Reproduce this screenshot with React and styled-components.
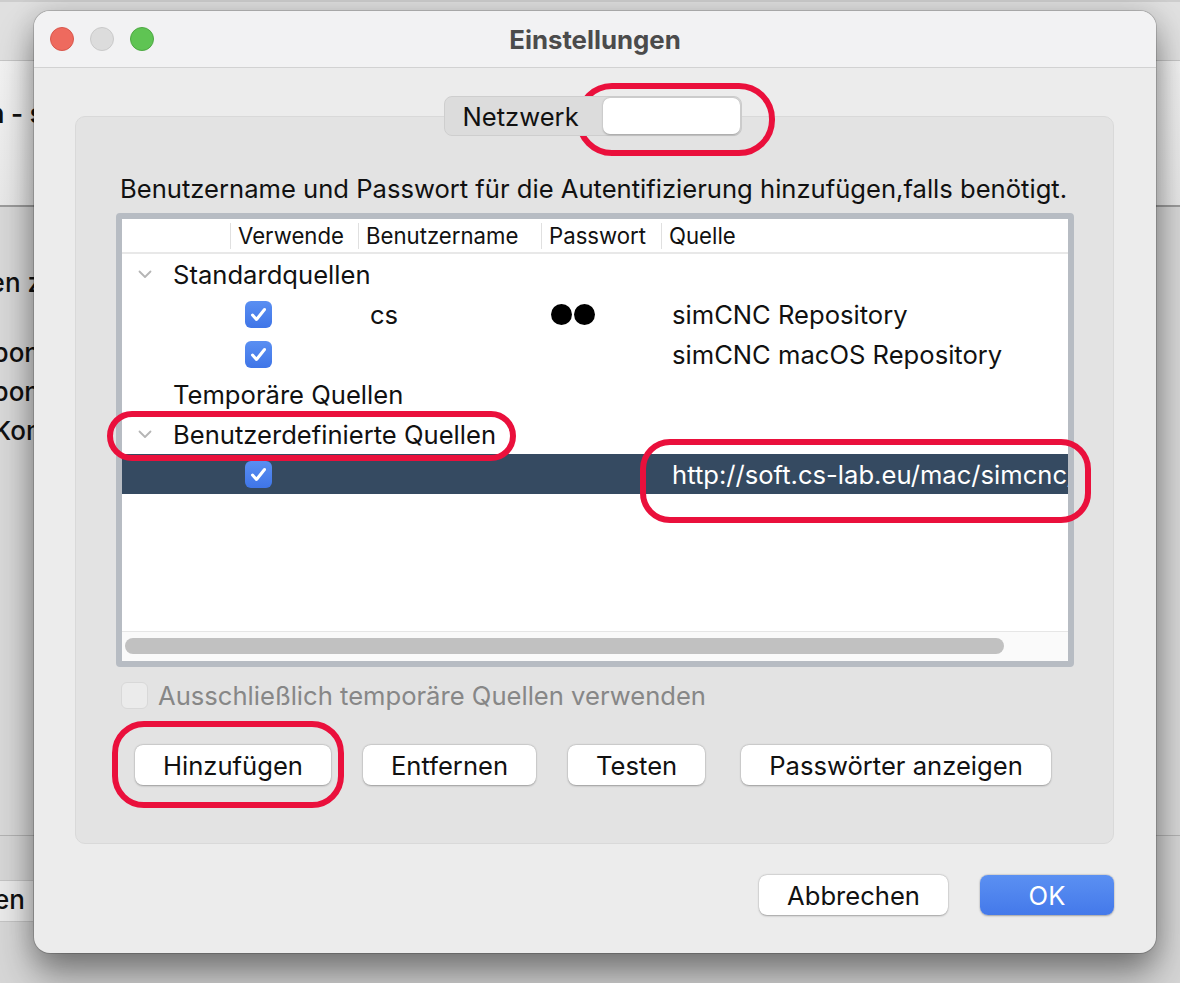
import React from "react";
import styled, { createGlobalStyle } from "styled-components";

const GlobalStyle = createGlobalStyle`
  html, body {
    margin: 0;
    padding: 0;
  }
  body {
    width: 1180px;
    height: 983px;
    overflow: hidden;
    font-family: Inter, "Liberation Sans", Arial, sans-serif;
    color: #111;
  }
`;

const COLS = "108px 128px 183px 120px 1fr";
const TEXT = "25.6px";

const Desktop = styled.div`
  position: relative;
  width: 1180px;
  height: 983px;
  overflow: hidden;
  background: #d2d2d2;
`;

/* the app window behind the dialog */
const BackWindow = styled.div`
  display: flex;
  flex-direction: column;
  height: 100%;
`;

const BackToolbar = styled.div`
  height: 58px;
  background: #e0e0e0;
  border-top: 2px solid #cdcdcd;
  border-bottom: 1px solid #c6c6c6;
`;

const BackHeader = styled.div`
  height: 146px;
  padding-top: 33px;
  box-sizing: border-box;
  background: linear-gradient(#f2f2f2, #e8e8e8);
  border-bottom: 2px solid #9c9c9c;
`;

const BackContent = styled.div`
  flex: 1;
  padding-top: 56px;
  background: #d8d8d8;
  border-bottom: 1px solid #b3b3b3;
`;

const BackFooter = styled.div`
  height: 147px;
  display: flex;
  flex-direction: column;
  padding-top: 44px;
  box-sizing: border-box;
  background: #d6d6d6;
`;

const BackButtonRow = styled.div`
  width: 33px;
  height: 40px;
  background: #e9e9e9;
  border-top: 1px solid #c4c4c4;
  border-bottom: 1px solid #c4c4c4;
`;

const BackText = styled.div`
  width: ${(p) => p.$w || 40}px;
  overflow: hidden;
  display: flex;
  justify-content: flex-end;
  box-sizing: border-box;
  padding-right: ${(p) => p.$pr || 0}px;
  white-space: nowrap;
  font-size: 26px;
  line-height: ${(p) => p.$lh || 39}px;
  font-weight: ${(p) => (p.$bold ? 600 : 500)};
  margin-top: ${(p) => p.$mt || 0}px;
  color: #111;
`;

/* dialog */
const Dialog = styled.div`
  position: absolute;
  left: 34px;
  top: 11px;
  width: 1122px;
  height: 942px;
  display: flex;
  flex-direction: column;
  background: #ececec;
  border-radius: 16px;
  box-shadow: 0 0 0 1px rgba(0, 0, 0, 0.16), 0 22px 36px rgba(0, 0, 0, 0.42),
    0 0 26px rgba(0, 0, 0, 0.14);
  overflow: hidden;
`;

const TitleBar = styled.div`
  height: 56px;
  flex-shrink: 0;
  display: grid;
  grid-template-columns: 1fr auto 1fr;
  align-items: center;
  padding: 0 16px;
  background: #f2f2f3;
  border-bottom: 1px solid #d2d2d2;
`;

const Lights = styled.div`
  display: flex;
  gap: 16px;
`;

const Light = styled.span`
  width: 24px;
  height: 24px;
  border-radius: 50%;
  box-sizing: border-box;
  background: ${(p) => p.$bg};
  border: 1px solid ${(p) => p.$edge};
`;

const Title = styled.div`
  font-size: 25.8px;
  font-weight: 700;
  color: #4b4b4b;
`;

const Body = styled.div`
  flex: 1;
  display: flex;
  flex-direction: column;
  padding: 28px 42px 38px 41px;
`;

const TabArea = styled.div`
  display: flex;
  flex-direction: column;
`;

const TabBar = styled.div`
  align-self: center;
  position: relative;
  z-index: 1;
  display: flex;
  align-items: stretch;
  height: 40px;
  box-sizing: border-box;
  margin: 0 4px -20px 0;
  background: #dcdcdc;
  border: 1px solid #cecece;
  border-radius: 8px;
`;

const TabButton = styled.div`
  display: flex;
  align-items: center;
  box-sizing: border-box;
  font-size: ${TEXT};
  color: #111;
  white-space: nowrap;
  ${(p) =>
    p.$active
      ? `
    width: 137px;
    margin: 1px 1px 1px 0;
    background: #fff;
    border-radius: 7px;
    box-shadow: 0 0.5px 2px rgba(0,0,0,0.28);
  `
      : `
    width: 158px;
    padding-left: 18px;
  `}
`;

const Pane = styled.div`
  height: 728px;
  box-sizing: border-box;
  display: flex;
  flex-direction: column;
  padding: 57px 39px 0 40px;
  background: #e3e3e3;
  border: 1px solid #d9d9d9;
  border-radius: 10px;
`;

const Hint = styled.div`
  height: 30px;
  line-height: 30px;
  padding-left: 4px;
  font-size: ${TEXT};
  white-space: nowrap;
  margin-bottom: 9px;
`;

const TableFrame = styled.div`
  height: 454px;
  box-sizing: border-box;
  border: 6px solid #b7bcc3;
  border-radius: 4px;
  background: #fff;
  display: flex;
  flex-direction: column;
  overflow: hidden;
`;

const HeaderRow = styled.div`
  display: grid;
  grid-template-columns: ${COLS};
  height: 35px;
  flex-shrink: 0;
  align-items: center;
  border-bottom: 2px solid #e8e8e8;
  box-sizing: border-box;
`;

const HeaderCell = styled.div`
  height: 26px;
  line-height: 26px;
  padding-left: 7px;
  font-size: 22.2px;
  border-left: ${(p) => (p.$first ? "none" : "1px solid #e0e0e0")};
  white-space: nowrap;
  overflow: hidden;
`;

const GroupRow = styled.div`
  height: 40px;
  display: flex;
  align-items: center;
  font-size: ${TEXT};
  white-space: nowrap;
`;

const Expander = styled.span`
  width: 51px;
  display: flex;
  align-items: center;
  padding-left: 16px;
  box-sizing: border-box;
`;

const DataRow = styled.div`
  height: 40px;
  display: grid;
  grid-template-columns: ${COLS};
  align-items: center;
  font-size: ${TEXT};
  white-space: nowrap;
  background: ${(p) => (p.$selected ? "#354a61" : "transparent")};
  color: ${(p) => (p.$selected ? "#fff" : "#111")};
`;

const Cell = styled.div`
  display: flex;
  align-items: center;
  padding-left: ${(p) => p.$pad || 0}px;
  overflow: hidden;
  min-width: 0;
`;

const CheckBox = styled.span`
  width: 27px;
  height: 27px;
  flex-shrink: 0;
  box-sizing: border-box;
  border-radius: 6px;
  display: flex;
  align-items: center;
  justify-content: center;
  background: ${(p) =>
    p.$disabled ? "#ebebeb" : "linear-gradient(#5a8ff2, #3f75e7)"};
  border: ${(p) => (p.$disabled ? "1px solid #d8d8d8" : "none")};
`;

const Dots = styled.span`
  display: flex;
  gap: 2px;
`;

const Dot = styled.span`
  width: 21px;
  height: 21px;
  border-radius: 50%;
  background: #000;
`;

const TableSpace = styled.div`
  flex: 1;
`;

const ScrollTrack = styled.div`
  height: 30px;
  flex-shrink: 0;
  box-sizing: border-box;
  border-top: 1px solid #e6e6e6;
  background: #fafafa;
  padding: 6px 0 0 3px;
`;

const ScrollThumb = styled.div`
  width: 879px;
  height: 16px;
  border-radius: 8px;
  background: #c1c1c1;
`;

const OptionRow = styled.label`
  display: flex;
  align-items: center;
  gap: 10px;
  height: 27px;
  margin: 15px 0 0 5px;
  font-size: ${TEXT};
  white-space: nowrap;
  color: #878787;
`;

const ButtonRow = styled.div`
  display: flex;
  gap: 32px;
  margin: ${(p) => p.$margin || "0"};
  justify-content: ${(p) => (p.$end ? "flex-end" : "flex-start")};
`;

const Button = styled.button`
  height: 40px;
  min-width: ${(p) => p.$min || 0}px;
  margin-left: ${(p) => p.$ml || 0}px;
  padding: 0 28px;
  border: none;
  border-radius: 8px;
  font-family: inherit;
  font-size: ${TEXT};
  background: ${(p) =>
    p.$primary ? "linear-gradient(#5b90f2, #4479ea)" : "#fff"};
  color: ${(p) => (p.$primary ? "#fff" : "#111")};
  box-shadow: 0 0.5px 2px rgba(0, 0, 0, 0.3), 0 0 0 0.5px rgba(0, 0, 0, 0.06);
  white-space: nowrap;
`;

const Mark = styled.div`
  position: absolute;
  left: ${(p) => p.$x}px;
  top: ${(p) => p.$y}px;
  width: ${(p) => p.$w}px;
  height: ${(p) => p.$h}px;
  box-sizing: border-box;
  border: 6px solid #ea103c;
  border-radius: ${(p) => p.$r}px;
  pointer-events: none;
`;

const Check = () => (
  <svg width="19" height="19" viewBox="0 0 19 19">
    <polyline
      points="3.5,10 7.5,14.5 15.5,4.5"
      fill="none"
      stroke="#fff"
      strokeWidth="3"
      strokeLinecap="round"
      strokeLinejoin="round"
    />
  </svg>
);

const Chevron = () => (
  <svg width="14" height="9" viewBox="0 0 14 9">
    <polyline
      points="1.5,1.5 7,7 12.5,1.5"
      fill="none"
      stroke="#b5b5b5"
      strokeWidth="1.8"
      strokeLinecap="round"
      strokeLinejoin="round"
    />
  </svg>
);

const columns = ["", "Verwende", "Benutzername", "Passwort", "Quelle"];

const rows = [
  { type: "group", label: "Standardquellen", open: true },
  { type: "item", user: "cs", pass: 2, source: "simCNC Repository" },
  { type: "item", user: "", pass: 0, source: "simCNC macOS Repository" },
  { type: "group", label: "Temporäre Quellen", open: false },
  { type: "group", label: "Benutzerdefinierte Quellen", open: true },
  {
    type: "item",
    user: "",
    pass: 0,
    source: "http://soft.cs-lab.eu/mac/simcnc/",
    selected: true,
  },
];

export default function App() {
  return (
    <>
      <GlobalStyle />
      <Desktop>
        <BackWindow>
          <BackToolbar />
          <BackHeader>
            <BackText $bold $lh={40} $w={44}>
              Version - s
            </BackText>
          </BackHeader>
          <BackContent>
            <BackText $w={42}>Paketen z</BackText>
            <BackText $mt={31} $w={40}>
              Kompon
            </BackText>
            <BackText $w={40}>Kompon</BackText>
            <BackText $w={49}>Kom</BackText>
          </BackContent>
          <BackFooter>
            <BackButtonRow>
              <BackText $lh={38} $w={33} $pr={8}>
                Schließen
              </BackText>
            </BackButtonRow>
          </BackFooter>
        </BackWindow>

        <Dialog>
          <TitleBar>
            <Lights>
              <Light $bg="#ee6a5e" $edge="#d8574c" />
              <Light $bg="#dcdcdc" $edge="#c9c9c9" />
              <Light $bg="#5fc453" $edge="#4ea843" />
            </Lights>
            <Title>Einstellungen</Title>
            <span />
          </TitleBar>

          <Body>
            <TabArea>
              <TabBar>
                <TabButton>Netzwerk</TabButton>
                <TabButton $active />
              </TabBar>
              <Pane>
                <Hint>
                  Benutzername und Passwort für die Autentifizierung
                  hinzufügen,falls benötigt.
                </Hint>
                <TableFrame>
                  <HeaderRow>
                    {columns.map((c, i) => (
                      <HeaderCell key={i} $first={i === 0}>
                        {c}
                      </HeaderCell>
                    ))}
                  </HeaderRow>
                  {rows.map((r, i) =>
                    r.type === "group" ? (
                      <GroupRow key={i}>
                        <Expander>{r.open && <Chevron />}</Expander>
                        {r.label}
                      </GroupRow>
                    ) : (
                      <DataRow key={i} $selected={r.selected}>
                        <Cell />
                        <Cell $pad={15}>
                          <CheckBox>
                            <Check />
                          </CheckBox>
                        </Cell>
                        <Cell $pad={12}>{r.user}</Cell>
                        <Cell $pad={10}>
                          {r.pass > 0 && (
                            <Dots>
                              {Array.from({ length: r.pass }).map((_, k) => (
                                <Dot key={k} />
                              ))}
                            </Dots>
                          )}
                        </Cell>
                        <Cell $pad={11}>{r.source}</Cell>
                      </DataRow>
                    )
                  )}
                  <TableSpace />
                  <ScrollTrack>
                    <ScrollThumb />
                  </ScrollTrack>
                </TableFrame>

                <OptionRow>
                  <CheckBox $disabled />
                  Ausschließlich temporäre Quellen verwenden
                </OptionRow>

                <ButtonRow $margin="36px 0 0 19px">
                  <Button>Hinzufügen</Button>
                  <Button>Entfernen</Button>
                  <Button>Testen</Button>
                  <Button $ml={4}>Passwörter anzeigen</Button>
                </ButtonRow>
              </Pane>
            </TabArea>

            <ButtonRow $end $margin="31px 0 0 0">
              <Button>Abbrechen</Button>
              <Button $primary $min={134}>
                OK
              </Button>
            </ButtonRow>
          </Body>
        </Dialog>

        <Mark $x={576} $y={83} $w={199} $h={73} $r={36} />
        <Mark $x={107} $y={411} $w={409} $h={50} $r={25} />
        <Mark $x={640} $y={439} $w={451} $h={84} $r={30} />
        <Mark $x={112} $y={721} $w={232} $h={87} $r={32} />
      </Desktop>
    </>
  );
}
